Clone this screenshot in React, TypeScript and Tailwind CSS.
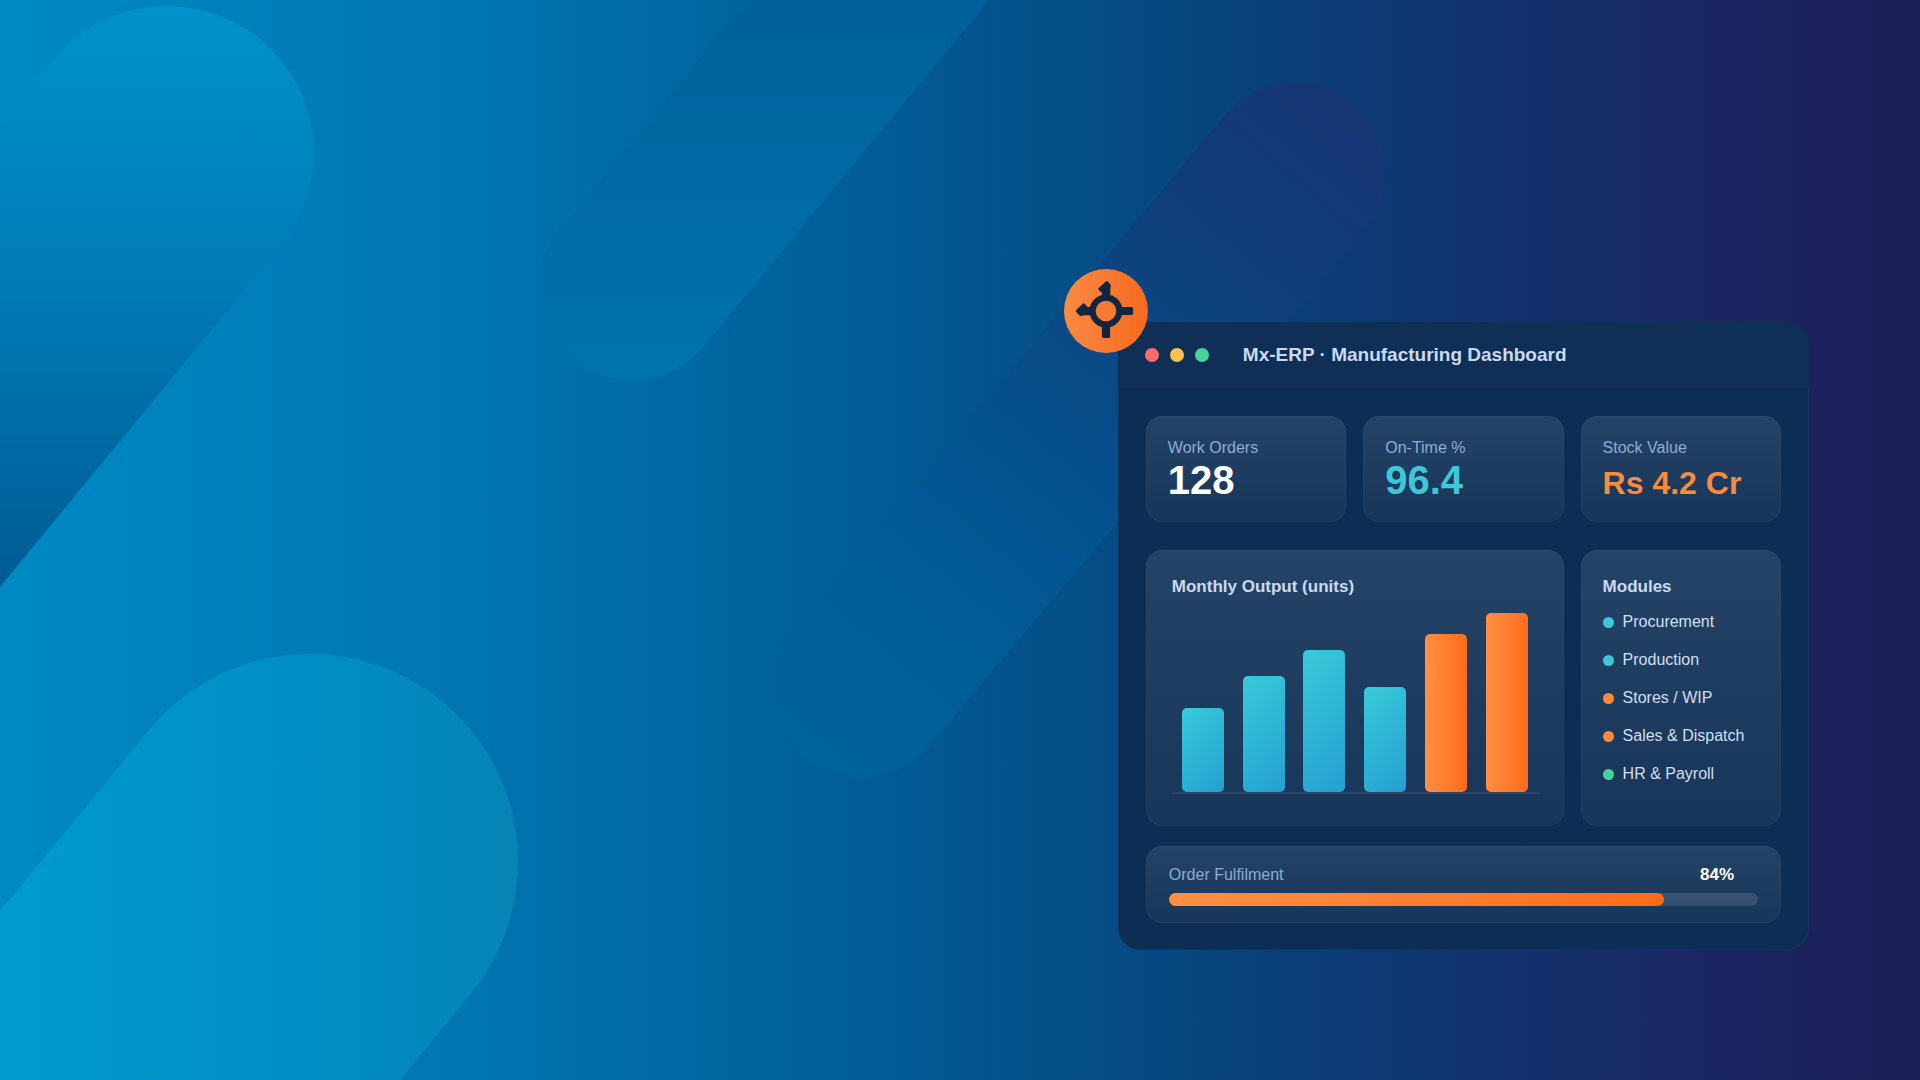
const stats = [
  { label: 'Work Orders', value: '128', valueClass: 'text-white' },
  { label: 'On-Time %', value: '96.4', valueClass: 'text-[#3cc8d8]' },
  { label: 'Stock Value', value: 'Rs 4.2 Cr', valueClass: 'text-[32px] leading-8 text-[#fb8a3c]' },
]

const teal = 'bg-linear-135 from-[#39cad8] to-[#259fd2]'
const orange = 'bg-linear-to-r from-[#ff8f43] to-[#ff6b17]'

// Bar heights are in pixels, the tallest one fills the plot
const bars = [
  { height: 84, fill: teal },
  { height: 116, fill: teal },
  { height: 142, fill: teal },
  { height: 105, fill: teal },
  { height: 158, fill: orange },
  { height: 179, fill: orange },
]

const modules = [
  { name: 'Procurement', dot: 'bg-[#3cc8d8]' },
  { name: 'Production', dot: 'bg-[#3cc8d8]' },
  { name: 'Stores / WIP', dot: 'bg-[#fb8a3c]' },
  { name: 'Sales & Dispatch', dot: 'bg-[#fb8a3c]' },
  { name: 'HR & Payroll', dot: 'bg-[#46d39a]' },
]

const card = 'rounded-2xl bg-linear-to-b from-[#254366] to-[#18365a] ring-1 ring-inset ring-white/4'

function Backdrop() {
  return (
    <svg
      className="absolute inset-0 h-full w-full"
      viewBox="0 0 1920 1080"
      preserveAspectRatio="xMidYMid slice"
      fill="none"
      strokeLinecap="round"
      aria-hidden="true"
    >
      <defs>
        <linearGradient id="sky" gradientUnits="userSpaceOnUse" x1="0" y1="0" x2="1920" y2="0">
          <stop offset="0" stopColor="#008ac4" />
          <stop offset="0.23" stopColor="#0077b2" />
          <stop offset="0.4" stopColor="#00639d" />
          <stop offset="0.57" stopColor="#054d86" />
          <stop offset="0.7" stopColor="#0c3b75" />
          <stop offset="0.88" stopColor="#1a2764" />
          <stop offset="1" stopColor="#1c1f57" />
        </linearGradient>
        <linearGradient id="left" gradientUnits="userSpaceOnUse" x1="0" y1="0" x2="0" y2="590">
          <stop offset="0" stopColor="#0093cc" />
          <stop offset="0.5" stopColor="#007ab4" />
          <stop offset="1" stopColor="#005a95" />
        </linearGradient>
        <linearGradient id="bottom" gradientUnits="userSpaceOnUse" x1="0" y1="0" x2="520" y2="0">
          <stop offset="0" stopColor="#009bcf" />
          <stop offset="0.55" stopColor="#008fc5" />
          <stop offset="1" stopColor="#0784b6" />
        </linearGradient>
        <linearGradient id="top" gradientUnits="userSpaceOnUse" x1="0" y1="0" x2="0" y2="380">
          <stop offset="0" stopColor="#00609b" />
          <stop offset="1" stopColor="#0074ad" />
        </linearGradient>
        <linearGradient id="middle" gradientUnits="userSpaceOnUse" x1="1350" y1="100" x2="800" y2="750">
          <stop offset="0" stopColor="#173573" />
          <stop offset="0.15" stopColor="#113b78" />
          <stop offset="0.35" stopColor="#0b4581" />
          <stop offset="0.6" stopColor="#03548f" />
          <stop offset="0.75" stopColor="#015b95" />
          <stop offset="1" stopColor="#00639c" />
        </linearGradient>
      </defs>
      <rect width="1920" height="1080" fill="url(#sky)" />
      <path d="M167 153L-193 590" stroke="url(#left)" strokeWidth="294" />
      <path d="M310 862L-50 1299" stroke="url(#bottom)" strokeWidth="416" />
      <path d="M632 287L992 -150" stroke="url(#top)" strokeWidth="186" />
      <path d="M1295 172L861 687" stroke="url(#middle)" strokeWidth="180" />
    </svg>
  )
}

function GearBadge() {
  return (
    <div className="absolute -left-[54px] -top-[53px] size-[84px] rounded-full bg-linear-to-r from-[#fb8a42] to-[#f5691c]">
      <svg viewBox="0 0 84 84" className="size-full" aria-hidden="true">
        <circle cx="42" cy="42" r="13.4" fill="none" stroke="#12273f" strokeWidth="6.2" />
        <g fill="#12273f" stroke="#12273f" strokeWidth="3" strokeLinejoin="round">
          <path d="M57 39.4H67.6V44.6H57Z" />
          <path d="M39.4 57H44.6V67.6H39.4Z" />
          <path d="M42.8 13.6L45.4 16.4L44.8 19.8V28H39.8L39.2 22.8L35.8 20Z" />
          <path d="M13.4 42L19.6 35.8L22.8 39.2L28 39.8V44.7H19.6L16.6 45.5Z" />
        </g>
      </svg>
    </div>
  )
}

export default function App() {
  return (
    <main className="relative flex min-h-screen justify-end overflow-hidden bg-[#054d86] pt-[322px] pr-[111px] pb-16 font-['Liberation_Sans',Arial,sans-serif]">
      <Backdrop />

      <section className="relative w-[36vw] min-w-[640px] self-start rounded-[22px] bg-[#0d2e54] ring-1 ring-inset ring-white/3">
        <GearBadge />

        <header className="flex h-[66px] items-center rounded-t-[22px] bg-[#0f2f57] px-[27px]">
          <div className="flex gap-[11px]">
            <span className="size-[14px] rounded-full bg-[#ff6b6b]" />
            <span className="size-[14px] rounded-full bg-[#ffc04d]" />
            <span className="size-[14px] rounded-full bg-[#46d39a]" />
          </div>
          <h1 className="ml-[34px] text-[19px] leading-5 font-bold text-[#c9dbf2]">
            Mx-ERP · Manufacturing Dashboard
          </h1>
        </header>

        <div className="px-7 pt-7 pb-[27px]">
          <div className="grid grid-cols-3 gap-x-[17px]">
            {stats.map((stat) => (
              <div key={stat.label} className={`${card} p-[22px]`}>
                <p className="text-base leading-5 text-[#8dadd4]">{stat.label}</p>
                <p className="mt-0.5 text-[40px] leading-10 font-bold whitespace-nowrap">
                  <span className={stat.valueClass}>{stat.value}</span>
                </p>
              </div>
            ))}
          </div>

          <div className="mt-7 grid grid-cols-3 gap-x-[17px]">
            <div className={`${card} col-span-2 pt-[27px] pr-6 pb-8 pl-[26px]`}>
              <h2 className="text-[17px] leading-5 font-bold text-[#c9dbf2]">Monthly Output (units)</h2>
              <div className="mt-4 flex items-end justify-between border-b-2 border-white/8 pr-3 pl-2.5">
                {bars.map((bar, i) => (
                  <div
                    key={i}
                    className={`${bar.fill} w-[42px] rounded-[5px]`}
                    style={{ height: bar.height }}
                  />
                ))}
              </div>
            </div>

            <div className={`${card} px-[22px] pt-[27px]`}>
              <h2 className="text-[17px] leading-5 font-bold text-[#c9dbf2]">Modules</h2>
              <ul className="mt-[15px] flex flex-col gap-[18px]">
                {modules.map((item) => (
                  <li key={item.name} className="flex items-center gap-[9px] text-base leading-5 whitespace-nowrap text-[#d0dff2]">
                    <span className={`${item.dot} size-[11px] shrink-0 rounded-full`} />
                    {item.name}
                  </li>
                ))}
              </ul>
            </div>
          </div>

          <div className={`${card} mt-5 px-[23px] pt-[19px] pb-[17px]`}>
            <div className="flex justify-between pr-6">
              <span id="fulfilment" className="text-base leading-5 text-[#8dadd4]">Order Fulfilment</span>
              <span className="text-[17px] leading-5 font-bold text-white">84%</span>
            </div>
            <div
              role="progressbar"
              aria-labelledby="fulfilment"
              aria-valuenow={84}
              className="mt-2 h-[13px] rounded-full bg-white/12"
            >
              <div className={`${orange} h-full rounded-full`} style={{ width: '84%' }} />
            </div>
          </div>
        </div>
      </section>
    </main>
  )
}
